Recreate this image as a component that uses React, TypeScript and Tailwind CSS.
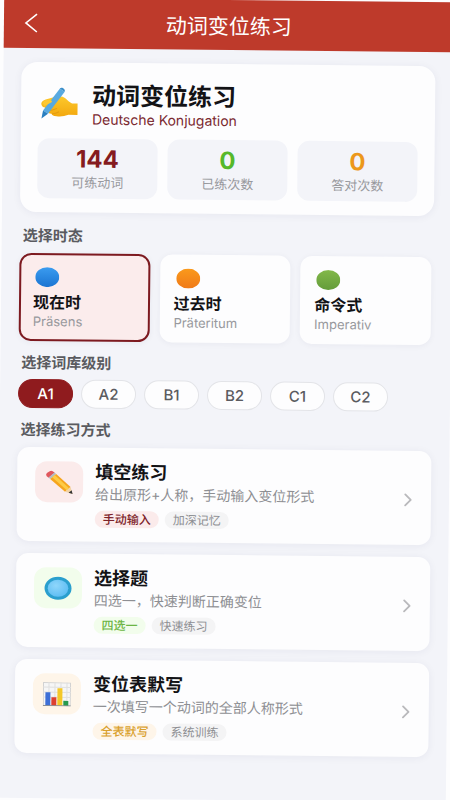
import { ChevronRight } from "lucide-react";

const stats = [
  { value: "144", label: "可练动词", color: "text-[#851b20]" },
  { value: "0", label: "已练次数", color: "text-[#56b82a]" },
  { value: "0", label: "答对次数", color: "text-[#ec981b]" },
];

const tenses = [
  { id: "praesens", title: "现在时", sub: "Präsens", from: "#3b9cf0", to: "#1a74d2" },
  { id: "praeteritum", title: "过去时", sub: "Präteritum", from: "#fa9a1c", to: "#f07a18" },
  { id: "imperativ", title: "命令式", sub: "Imperativ", from: "#82b84a", to: "#649c3a" },
];

const levels = ["A1", "A2", "B1", "B2", "C1", "C2"];

const WritingHand = () => (
  <svg width="38" height="34" viewBox="0 0 38 34" aria-hidden="true">
    <defs>
      <linearGradient id="hand" x1="0" y1="0" x2="0" y2="1">
        <stop offset="0" stopColor="#fdc92c" />
        <stop offset="1" stopColor="#f3a80f" />
      </linearGradient>
    </defs>
    <path
      d="M1.500 19c-1-2.500 1-4.500 4-5.500l8-2.500c3-1 6-1.500 9-.5 4 1.500 6 5.500 9.500 6.500h5.500v11.500h-9c-4 1.500-8 2-12 1.500-3-.2-4.500-1-5-2.500-2.500-.2-4-1.500-4-3-2-.3-3-1.500-2.500-3-1.800-.2-3-1-3.500-2.500z"
      fill="url(#hand)"
    />
    <path d="M8 24.500c3 0 6-.8 9-2.300M12 27.500c2.500 0 5-.8 7-2" stroke="#e59d12" fill="none" />
    <path d="M19.500 2.500l5 3L8 27.500l-5-3z" fill="#58a9e0" />
    <path d="M19.500 2.500c1.200-2.500 6-.3 5 3z" fill="#3b8fca" />
    <path d="M3 24.500l5 3-6.500 5z" fill="#2a7fc0" />
    <path d="M2.500 17c2-3.500 6-4 9-2.500 1 .8 0 2-2 2.500l-5 3z" fill="#fdc833" />
  </svg>
);

const Pencil = () => (
  <svg width="28" height="24" viewBox="0 0 28 24" aria-hidden="true">
    <path d="M1.500 6C.5 4.500 1 3.500 2 2.700L4.500 1c1-.7 2-.7 3 0l2 1.500-6 5z" fill="#e0575d" />
    <path d="M3.300 7.300l6-5L11 3.800l-6 5z" fill="#b3bcc3" />
    <path d="M5 8.800l6-5L25.500 16.500l-5.500 4.800z" fill="#f6a51d" />
    <path d="M7 7.100l2.600-2.200 14.400 12.900-2.300 2z" fill="#fdcb45" />
    <path d="M20 21.300l5.500-4.800 2 7z" fill="#f2d2a4" />
    <path d="M23.600 22.300l3-2.500 1 3.900z" fill="#333" />
  </svg>
);

const RadioDot = () => (
  <svg width="28" height="24" viewBox="0 0 28 24" aria-hidden="true">
    <defs>
      <radialGradient id="dot" cx="0.4" cy="0.35" r="0.7">
        <stop offset="0" stopColor="#8fd6fb" />
        <stop offset="1" stopColor="#5bbcf3" />
      </radialGradient>
    </defs>
    <ellipse cx="14" cy="12" rx="13.500" ry="11.500" fill="#2a9fce" />
    <ellipse cx="14" cy="12" rx="10.300" ry="8.600" fill="url(#dot)" />
  </svg>
);

const BarChart = () => (
  <svg width="28" height="24" viewBox="0 0 28 24" aria-hidden="true">
    <rect x="0.500" y="0.500" width="27" height="23" fill="#f6f6f6" stroke="#d2d2d2" />
    <path d="M0 5h28M0 10h28M0 15h28M6 0v24M12 0v24M18 0v24M24 0v24" stroke="#dfdfdf" />
    <rect x="2.500" y="10" width="5" height="13.500" fill="#3d6fd6" />
    <rect x="8.500" y="15" width="5" height="8.500" fill="#dd4030" />
    <rect x="14.500" y="6" width="5" height="17.500" fill="#f4c829" />
    <rect x="20.500" y="18.500" width="5" height="5" fill="#279a4d" />
    <path d="M0 23.500h28" stroke="#8a8f94" />
  </svg>
);

const modes = [
  {
    title: "填空练习",
    desc: "给出原形+人称，手动输入变位形式",
    icon: <Pencil />,
    iconBg: "bg-[#fbebeb]",
    tag: "手动输入",
    tagColor: "bg-[#fbebeb] text-[#7c2229]",
    extra: "加深记忆",
  },
  {
    title: "选择题",
    desc: "四选一，快速判断正确变位",
    icon: <RadioDot />,
    iconBg: "bg-[#f2fdec]",
    tag: "四选一",
    tagColor: "bg-[#f2fdec] text-[#6cb544]",
    extra: "快速练习",
  },
  {
    title: "变位表默写",
    desc: "一次填写一个动词的全部人称形式",
    icon: <BarChart />,
    iconBg: "bg-[#fef5e9]",
    tag: "全表默写",
    tagColor: "bg-[#fef5e9] text-[#d9a02c]",
    extra: "系统训练",
  },
];

const SectionTitle = ({ children }: { children: string }) => (
  <h2 className="px-[3px] text-[15px] leading-5 font-bold text-[#5a5b60]">{children}</h2>
);

export default function App() {
  return (
    <div className="min-h-screen overflow-hidden bg-[#fdfdfe] font-['Inter','Noto_Sans_CJK_SC',sans-serif]">
      <div className="min-h-screen rotate-[0.6deg] bg-[#f3f4f9] pb-6">
        <header className="grid h-[50px] grid-cols-[60px_1fr_60px] items-center bg-[#be3a2b] text-white">
          <button type="button" aria-label="返回" className="pl-5">
            <svg width="14" height="20" viewBox="0 0 14 20" fill="none" stroke="currentColor" strokeWidth="1.600">
              <path d="M13 1L2 10l11 9" />
            </svg>
          </button>
          <h1 className="pt-1 text-center text-[21px] leading-7">动词变位练习</h1>
        </header>

        <main className="px-[18px] pt-[14px]">
          <section className="rounded-2xl bg-[#fdfdfe] px-[17px] pt-[18px] pb-[14px] shadow-[0_1px_8px_rgba(40,40,80,0.06)]">
            <div className="flex items-center gap-[14px] pl-[2px]">
              <WritingHand />
              <div>
                <div className="text-2xl leading-8 font-bold text-[#131316]">动词变位练习</div>
                <div className="text-sm leading-[14px] text-[#7b2a31]">Deutsche Konjugation</div>
              </div>
            </div>
            <div className="mt-3 grid grid-cols-3 gap-[10px]">
              {stats.map((s) => (
                <div key={s.label} className="rounded-xl bg-[#f3f4f9] pt-[7px] pb-[7px] text-center">
                  <div className={`text-2xl leading-7 font-bold ${s.color}`}>{s.value}</div>
                  <div className="text-[13px] leading-[18px] text-[#98999d]">{s.label}</div>
                </div>
              ))}
            </div>
          </section>

          <section className="mt-[14px]">
            <SectionTitle>选择时态</SectionTitle>
            <div className="mt-[7px] grid grid-cols-3 gap-[10px] pr-[2px]">
              {tenses.map((t, i) => (
                <button
                  key={t.id}
                  type="button"
                  aria-pressed={i === 0}
                  className={
                    "rounded-xl border-2 px-3 pt-3 pb-[10px] text-left shadow-[0_1px_6px_rgba(40,40,80,0.05)] " +
                    (i === 0 ? "border-[#7d1a20] bg-[#fbecec]" : "border-[#fdfdfe] bg-[#fdfdfe]")
                  }
                >
                  <svg className="ml-[2px]" width="24" height="20" viewBox="0 0 24 20" aria-hidden="true">
                    <defs>
                      <linearGradient id={t.id} x1="0" y1="0" x2="0" y2="1">
                        <stop offset="0" stopColor={t.from} />
                        <stop offset="1" stopColor={t.to} />
                      </linearGradient>
                    </defs>
                    <ellipse cx="12" cy="10" rx="12" ry="10" fill={`url(#${t.id})`} />
                  </svg>
                  <div className="mt-1 text-base leading-[22px] font-bold text-[#131316]">{t.title}</div>
                  <div className="text-[13px] leading-4 text-[#98999d]">{t.sub}</div>
                </button>
              ))}
            </div>
          </section>

          <section className="mt-3">
            <SectionTitle>选择词库级别</SectionTitle>
            <div className="mt-[6px] flex gap-2">
              {levels.map((l, i) => (
                <button
                  key={l}
                  type="button"
                  aria-pressed={i === 0}
                  className={
                    "h-[29px] w-[55px] rounded-full border text-[15px] leading-5 font-medium " +
                    (i === 0
                      ? "border-[#8f1b1e] bg-[#8f1b1e] text-white"
                      : "border-[#e3e4e8] bg-[#fdfdfe] text-[#5a5b60]")
                  }
                >
                  {l}
                </button>
              ))}
            </div>
          </section>

          <section className="mt-3">
            <SectionTitle>选择练习方式</SectionTitle>
            <div className="mt-[7px] flex flex-col gap-3">
              {modes.map((m) => (
                <button
                  key={m.title}
                  type="button"
                  className="flex gap-3 rounded-xl bg-[#fdfdfe] py-[14px] pr-3 pl-[18px] text-left shadow-[0_1px_8px_rgba(40,40,80,0.06)]"
                >
                  <span className={`flex h-[41px] w-12 shrink-0 items-center justify-center rounded-xl ${m.iconBg}`}>
                    {m.icon}
                  </span>
                  <span className="flex-1">
                    <span className="block text-lg leading-[22px] font-bold text-[#131316]">{m.title}</span>
                    <span className="block text-sm leading-[22px] text-[#8e8f93]">{m.desc}</span>
                    <span className="mt-[5px] flex gap-[6px] text-xs leading-[17px]">
                      <span className={`rounded-full px-2 font-medium ${m.tagColor}`}>{m.tag}</span>
                      <span className="rounded-full bg-[#f4f4f5] px-2 text-[#8e8f93]">{m.extra}</span>
                    </span>
                  </span>
                  <ChevronRight className="mt-1 h-[22px] w-[22px] self-center text-[#b9b9bc]" />
                </button>
              ))}
            </div>
          </section>
        </main>
      </div>
    </div>
  );
}
